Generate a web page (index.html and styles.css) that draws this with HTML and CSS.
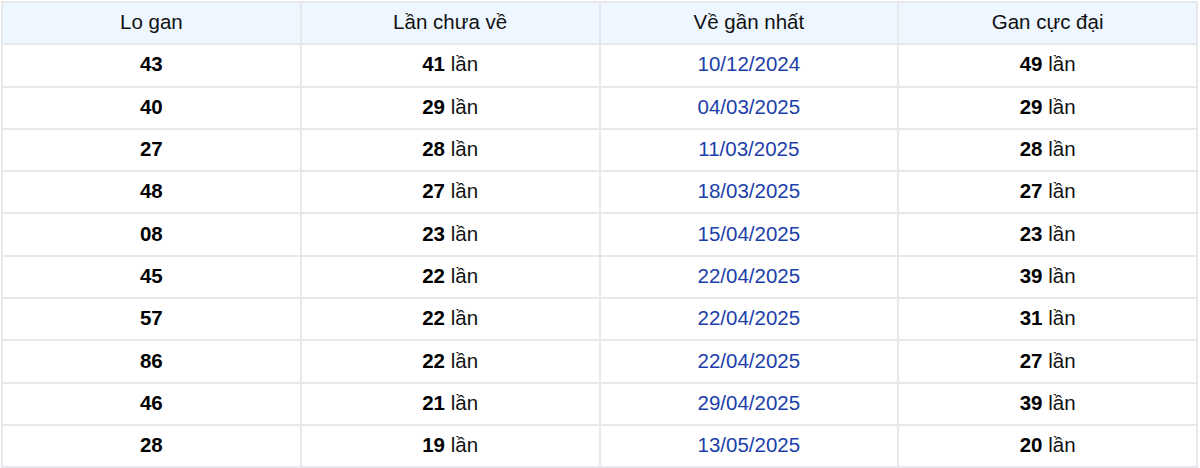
FILE: index.html
```html
<!DOCTYPE html>
<html lang="vi">
<head>
<meta charset="utf-8">
<link rel="stylesheet" href="styles.css">
</head>
<body>
<div class="wrap">
<table class="gan">
<thead>
<tr><th>Lo gan</th><th>Lần chưa về</th><th>Về gần nhất</th><th>Gan cực đại</th></tr>
</thead>
<tbody>
<tr><td class="num">43</td><td><b>41</b> lần</td><td class="date">10/12/2024</td><td><b>49</b> lần</td></tr>
<tr><td class="num">40</td><td><b>29</b> lần</td><td class="date">04/03/2025</td><td><b>29</b> lần</td></tr>
<tr><td class="num">27</td><td><b>28</b> lần</td><td class="date">11/03/2025</td><td><b>28</b> lần</td></tr>
<tr><td class="num">48</td><td><b>27</b> lần</td><td class="date">18/03/2025</td><td><b>27</b> lần</td></tr>
<tr><td class="num">08</td><td><b>23</b> lần</td><td class="date">15/04/2025</td><td><b>23</b> lần</td></tr>
<tr><td class="num">45</td><td><b>22</b> lần</td><td class="date">22/04/2025</td><td><b>39</b> lần</td></tr>
<tr><td class="num">57</td><td><b>22</b> lần</td><td class="date">22/04/2025</td><td><b>31</b> lần</td></tr>
<tr><td class="num">86</td><td><b>22</b> lần</td><td class="date">22/04/2025</td><td><b>27</b> lần</td></tr>
<tr><td class="num">46</td><td><b>21</b> lần</td><td class="date">29/04/2025</td><td><b>39</b> lần</td></tr>
<tr><td class="num">28</td><td><b>19</b> lần</td><td class="date">13/05/2025</td><td><b>20</b> lần</td></tr>
</tbody>
</table>
</div>
</body>
</html>
```
FILE: styles.css
```css
html, body {
  margin: 0;
  padding: 0;
  background: #fff;
}
.wrap {
  padding: 1px 2px 0 1px;
}
.gan {
  width: 100%;
  border-collapse: collapse;
  font-family: "Liberation Sans", Arial, sans-serif;
  font-size: 20.5px;
  line-height: 22px;
  color: #111;
  table-layout: fixed;
}
.gan th, .gan td {
  border: 2px solid #e6e8ec;
  text-align: center;
  height: 38.3px;
  padding: 0 0 2px;
}
.gan th {
  background: #eef6ff;
  font-weight: normal;
  height: 37.3px;
  padding: 0 0 3px;
}
.gan .num {
  font-weight: bold;
  color: #000;
}
.gan b {
  font-weight: bold;
  color: #000;
}
.gan .date {
  color: #1c3faa;
}
```
